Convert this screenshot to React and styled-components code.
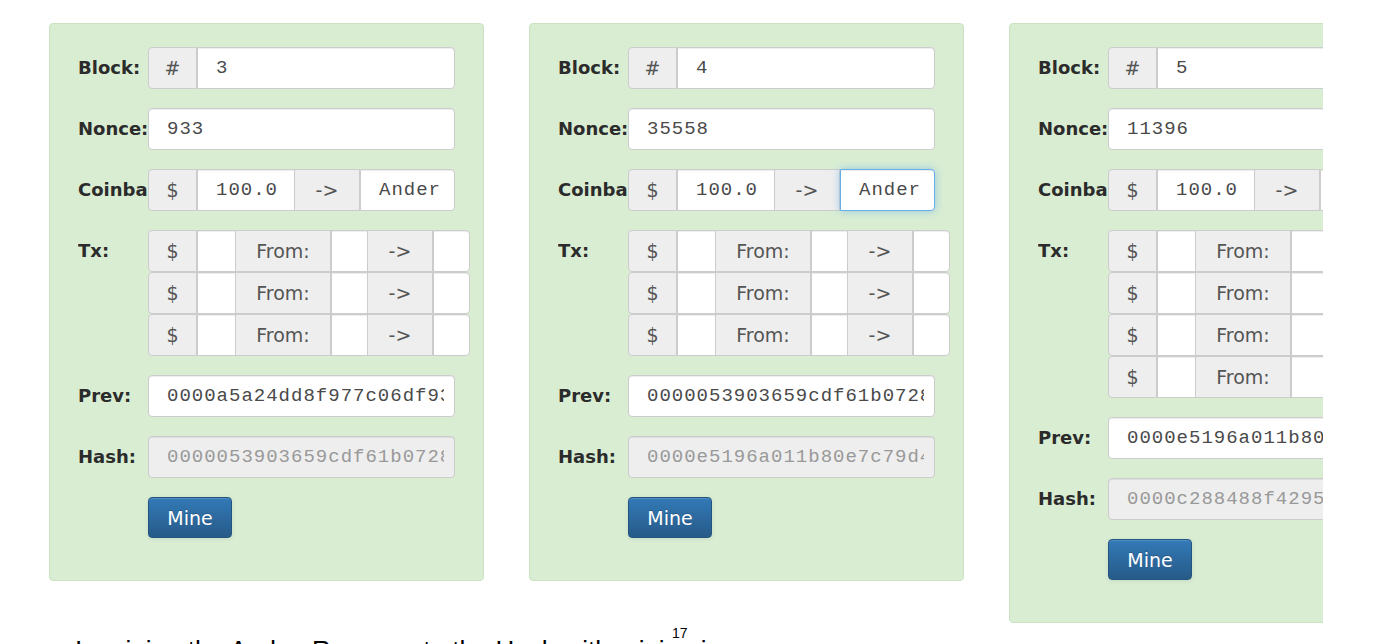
import React from "react";
import styled, { createGlobalStyle, css } from "styled-components";

const GlobalStyle = createGlobalStyle`
  html, body {
    margin: 0;
    padding: 0;
    background: #fff;
  }
  body {
    font-family: "DejaVu Sans", "Liberation Sans", sans-serif;
  }
  * {
    box-sizing: border-box;
  }
`;

const Stage = styled.div`
  width: 1323px;
  overflow: hidden;
  padding: 23px 0 0 49px;
`;

const CardsRow = styled.div`
  display: flex;
  align-items: flex-start;
  gap: 45px;
`;

const Card = styled.div`
  flex: none;
  width: 435px;
  min-width: 0;
  display: flex;
  flex-direction: column;
  gap: 19px;
  padding: 23px 0 42px 28px;
  background: #d9edd3;
  border: 1px solid #cbe2c2;
  border-radius: 4px;
`;

const FormRow = styled.div`
  display: flex;
  align-items: flex-start;
`;

const Label = styled.div`
  flex: none;
  width: 70px;
  height: 42px;
  line-height: 42px;
  overflow: hidden;
  white-space: nowrap;
  font-weight: bold;
  font-size: 18px;
  color: #2b2b2b;
`;

const Group = styled.div`
  display: flex;
  flex: none;
  width: ${(p) => p.$width}px;
  height: 42px;

  & > * + * {
    margin-left: -1px;
  }
  & > *:first-child {
    border-top-left-radius: 4px;
    border-bottom-left-radius: 4px;
  }
  & > *:last-child {
    border-top-right-radius: 4px;
    border-bottom-right-radius: 4px;
  }
`;

const TxStack = styled.div`
  display: flex;
  flex-direction: column;
  flex: none;
`;

const Addon = styled.span`
  flex: none;
  width: ${(p) => p.$w}px;
  display: flex;
  align-items: center;
  justify-content: center;
  background: #eee;
  border: 1px solid #ccc;
  color: #555;
  font-size: 19px;
  white-space: nowrap;
  overflow: hidden;
`;

const Field = styled.input`
  ${(p) =>
    p.$w
      ? css`
          flex: none;
          width: ${p.$w}px;
        `
      : css`
          flex: 1 1 0;
          width: 0;
        `}
  min-width: 0;
  height: 42px;
  margin: 0;
  padding: 0 10px 0 18px;
  border: 1px solid #ccc;
  border-radius: 0;
  background: #fff;
  color: #4a4a4a;
  font-family: "Liberation Mono", "DejaVu Sans Mono", monospace;
  font-size: 19px;
  letter-spacing: 1px;
  box-shadow: inset 0 1px 1px rgba(0, 0, 0, 0.075);
  outline: none;

  &:disabled {
    background: #eee;
    color: #999;
    -webkit-text-fill-color: #999;
    opacity: 1;
  }

  ${(p) =>
    p.$focus &&
    css`
      position: relative;
      z-index: 2;
      border-color: #66afe9;
      box-shadow: inset 0 1px 1px rgba(0, 0, 0, 0.075),
        0 0 8px rgba(102, 175, 233, 0.6);
    `}
`;

const Solo = styled(Field)`
  flex: none;
  width: ${(p) => p.$width}px;
  border-radius: 4px;
`;

const MineButton = styled.button`
  margin-left: 70px;
  width: 84px;
  height: 41px;
  padding: 0;
  border: 1px solid #245580;
  border-radius: 4px;
  background-image: linear-gradient(to bottom, #337ab7 0, #265a88 100%);
  color: #fff;
  font-family: "DejaVu Sans", sans-serif;
  font-size: 19px;
  text-shadow: 0 -1px 0 rgba(0, 0, 0, 0.2);
  box-shadow: inset 0 1px 0 rgba(255, 255, 255, 0.15),
    0 1px 5px rgba(0, 0, 0, 0.075);
`;

const Footer = styled.div`
  display: flex;
  align-items: flex-start;
  margin-top: 12px;
  padding-left: 75px;
  white-space: nowrap;
`;

const Caption = styled.span`
  flex: none;
  width: 597px;
  font-family: "Liberation Sans", Arial, sans-serif;
  font-size: 26px;
  color: #000;
`;

const PageNo = styled.span`
  margin-top: -9px;
  font-family: "Liberation Sans", Arial, sans-serif;
  font-size: 14px;
  line-height: 14px;
  color: #000;
`;

const blocks = [
  {
    num: 3,
    nonce: "933",
    prev: "0000a5a24dd8f977c06df93e1b4c2f0a7d5e9c81b6f2a04d3c7e8b91f5a2d6c0",
    hash: "0000053903659cdf61b0728e4a1c9d3f7b2e6a05c8d1f4b9e3a7c2d6f0b5e8a1",
    txs: 3,
  },
  {
    num: 4,
    nonce: "35558",
    prev: "0000053903659cdf61b0728e4a1c9d3f7b2e6a05c8d1f4b9e3a7c2d6f0b5e8a1",
    hash: "0000e5196a011b80e7c79d42f8a3b6c1e9d5f2a7b4c8e0d3f6a1b9c5e2d7f4a8",
    txs: 3,
    focus: true,
  },
  {
    num: 5,
    nonce: "11396",
    prev: "0000e5196a011b80e7c79d42f8a3b6c1e9d5f2a7b4c8e0d3f6a1b9c5e2d7f4a8",
    hash: "0000c288488f42953a7e1d6b9c4f2a8e5d1b7c3f9a6e2d8b4c1f7a5e3d9b6c2",
    txs: 4,
  },
];

function TxRow() {
  return (
    <Group $width={320}>
      <Addon $w={49}>$</Addon>
      <Field $w={39} readOnly defaultValue="" />
      <Addon $w={96}>From:</Addon>
      <Field $w={37} readOnly defaultValue="" />
      <Addon $w={66}>-&gt;</Addon>
      <Field $w={37} readOnly defaultValue="" />
    </Group>
  );
}

function BlockCard({ block }) {
  return (
    <Card>
      <FormRow>
        <Label>Block:</Label>
        <Group $width={307}>
          <Addon $w={49}>#</Addon>
          <Field readOnly defaultValue={block.num} />
        </Group>
      </FormRow>
      <FormRow>
        <Label>Nonce:</Label>
        <Solo $width={307} readOnly defaultValue={block.nonce} />
      </FormRow>
      <FormRow>
        <Label>Coinbase:</Label>
        <Group $width={307}>
          <Addon $w={49}>$</Addon>
          <Field $w={98} readOnly defaultValue="100.0" />
          <Addon $w={66}>-&gt;</Addon>
          <Field $focus={block.focus} readOnly defaultValue="Ander" />
        </Group>
      </FormRow>
      <FormRow>
        <Label>Tx:</Label>
        <TxStack>
          {Array.from({ length: block.txs }).map((_, i) => (
            <TxRow key={i} />
          ))}
        </TxStack>
      </FormRow>
      <FormRow>
        <Label>Prev:</Label>
        <Solo $width={307} readOnly defaultValue={block.prev} />
      </FormRow>
      <FormRow>
        <Label>Hash:</Label>
        <Solo $width={307} disabled defaultValue={block.hash} />
      </FormRow>
      <FormRow>
        <MineButton type="button">Mine</MineButton>
      </FormRow>
    </Card>
  );
}

export default function App() {
  return (
    <>
      <GlobalStyle />
      <Stage>
        <CardsRow>
          {blocks.map((b) => (
            <BlockCard key={b.num} block={b} />
          ))}
        </CardsRow>
      </Stage>
      <Footer>
        <Caption>In mining the Ander. Recompute the Hash with mining in</Caption>
        <PageNo>17</PageNo>
      </Footer>
    </>
  );
}
